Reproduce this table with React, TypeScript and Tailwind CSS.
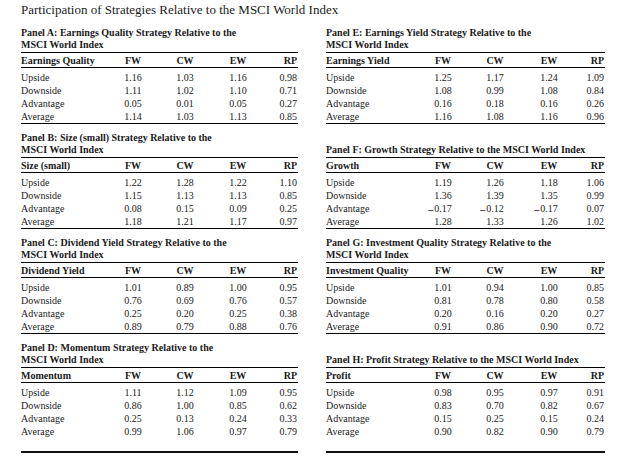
import React from "react";

type Row = [string, string, string, string, string];

type Panel = {
  title: string[];
  head: string;
  rows: Row[];
  last?: boolean;
};

const rowNames = ["Upside", "Downside", "Advantage", "Average"];

const mk = (vals: string[][]): Row[] =>
  vals.map((v, i) => [rowNames[i], v[0], v[1], v[2], v[3]] as Row);

const left: Panel[] = [
  {
    title: ["Panel A: Earnings Quality Strategy Relative to the", "MSCI World Index"],
    head: "Earnings Quality",
    rows: mk([
      ["1.16", "1.03", "1.16", "0.98"],
      ["1.11", "1.02", "1.10", "0.71"],
      ["0.05", "0.01", "0.05", "0.27"],
      ["1.14", "1.03", "1.13", "0.85"],
    ]),
  },
  {
    title: ["Panel B: Size (small) Strategy Relative to the", "MSCI World Index"],
    head: "Size (small)",
    rows: mk([
      ["1.22", "1.28", "1.22", "1.10"],
      ["1.15", "1.13", "1.13", "0.85"],
      ["0.08", "0.15", "0.09", "0.25"],
      ["1.18", "1.21", "1.17", "0.97"],
    ]),
  },
  {
    title: ["Panel C: Dividend Yield Strategy Relative to the", "MSCI World Index"],
    head: "Dividend Yield",
    rows: mk([
      ["1.01", "0.89", "1.00", "0.95"],
      ["0.76", "0.69", "0.76", "0.57"],
      ["0.25", "0.20", "0.25", "0.38"],
      ["0.89", "0.79", "0.88", "0.76"],
    ]),
  },
  {
    title: ["Panel D: Momentum Strategy Relative to the", "MSCI World Index"],
    head: "Momentum",
    last: true,
    rows: mk([
      ["1.11", "1.12", "1.09", "0.95"],
      ["0.86", "1.00", "0.85", "0.62"],
      ["0.25", "0.13", "0.24", "0.33"],
      ["0.99", "1.06", "0.97", "0.79"],
    ]),
  },
];

const right: Panel[] = [
  {
    title: ["Panel E: Earnings Yield Strategy Relative to the", "MSCI World Index"],
    head: "Earnings Yield",
    rows: mk([
      ["1.25", "1.17", "1.24", "1.09"],
      ["1.08", "0.99", "1.08", "0.84"],
      ["0.16", "0.18", "0.16", "0.26"],
      ["1.16", "1.08", "1.16", "0.96"],
    ]),
  },
  {
    title: ["Panel F: Growth Strategy Relative to the MSCI World Index"],
    head: "Growth",
    rows: mk([
      ["1.19", "1.26", "1.18", "1.06"],
      ["1.36", "1.39", "1.35", "0.99"],
      ["-0.17", "-0.12", "-0.17", "0.07"],
      ["1.28", "1.33", "1.26", "1.02"],
    ]),
  },
  {
    title: ["Panel G: Investment Quality Strategy Relative to the", "MSCI World Index"],
    head: "Investment Quality",
    rows: mk([
      ["1.01", "0.94", "1.00", "0.85"],
      ["0.81", "0.78", "0.80", "0.58"],
      ["0.20", "0.16", "0.20", "0.27"],
      ["0.91", "0.86", "0.90", "0.72"],
    ]),
  },
  {
    title: ["Panel H: Profit Strategy Relative to the MSCI World Index"],
    head: "Profit",
    last: true,
    rows: mk([
      ["0.98", "0.95", "0.97", "0.91"],
      ["0.83", "0.70", "0.82", "0.67"],
      ["0.15", "0.25", "0.15", "0.24"],
      ["0.90", "0.82", "0.90", "0.79"],
    ]),
  },
];

const Num = ({ v }: { v: string }) => {
  const neg = v.startsWith("-");
  return (
    <span className="relative">
      {neg && <span className="absolute right-full top-0 pr-[1px] font-bold">–</span>}
      {neg ? v.slice(1) : v}
    </span>
  );
};

const Table = ({ p, cols }: { p: Panel; cols: string }) => (
  <div>
    <div className="h-[25px] flex flex-col justify-end font-bold leading-[12px] pb-[1px]">
      {p.title.map((t) => (
        <div key={t}>{t}</div>
      ))}
    </div>
    <div className={`grid ${cols} h-[16px] items-center border-y border-black font-bold`}>
      <div>{p.head}</div>
      <div className="text-center">FW</div>
      <div className="text-center">CW</div>
      <div className="text-center">EW</div>
      <div className="text-right pr-[1px]">RP</div>
    </div>
    <div className="pt-[3px]">
      {p.rows.map((r) => (
        <div key={r[0]} className={`grid ${cols} h-[13px] leading-[13px]`}>
          <div>{r[0]}</div>
          <div className="text-center">
            <Num v={r[1]} />
          </div>
          <div className="text-center">
            <Num v={r[2]} />
          </div>
          <div className="text-center">
            <Num v={r[3]} />
          </div>
          <div className="text-right pr-[1px]">{r[4]}</div>
        </div>
      ))}
    </div>
    {p.last ? (
      <div className="mt-[13px] h-[2px] bg-[#111]" />
    ) : (
      <div className="h-[2px] border-t border-black" />
    )}
  </div>
);

export default function App() {
  return (
    <div
      className="w-[621px] h-[462px] bg-white text-[#1a1a1a] pl-[21px] pt-[3px]"
      style={{ fontFamily: '"Liberation Serif", serif' }}
    >
      <h1 className="text-[13px] leading-[14px] text-[#1c1c1c]">
        Participation of Strategies Relative to the MSCI World Index
      </h1>
      <div className="mt-[10px] grid grid-cols-[277px_279px] gap-x-[28px] text-[10px]">
        <div className="flex flex-col gap-[7px]">
          {left.map((p) => (
            <Table key={p.head} p={p} cols="grid-cols-[86px_52px_52px_54px_1fr]" />
          ))}
        </div>
        <div className="flex flex-col gap-[7px]">
          {right.map((p) => (
            <Table key={p.head} p={p} cols="grid-cols-[91px_52px_52px_56px_1fr]" />
          ))}
        </div>
      </div>
    </div>
  );
}
